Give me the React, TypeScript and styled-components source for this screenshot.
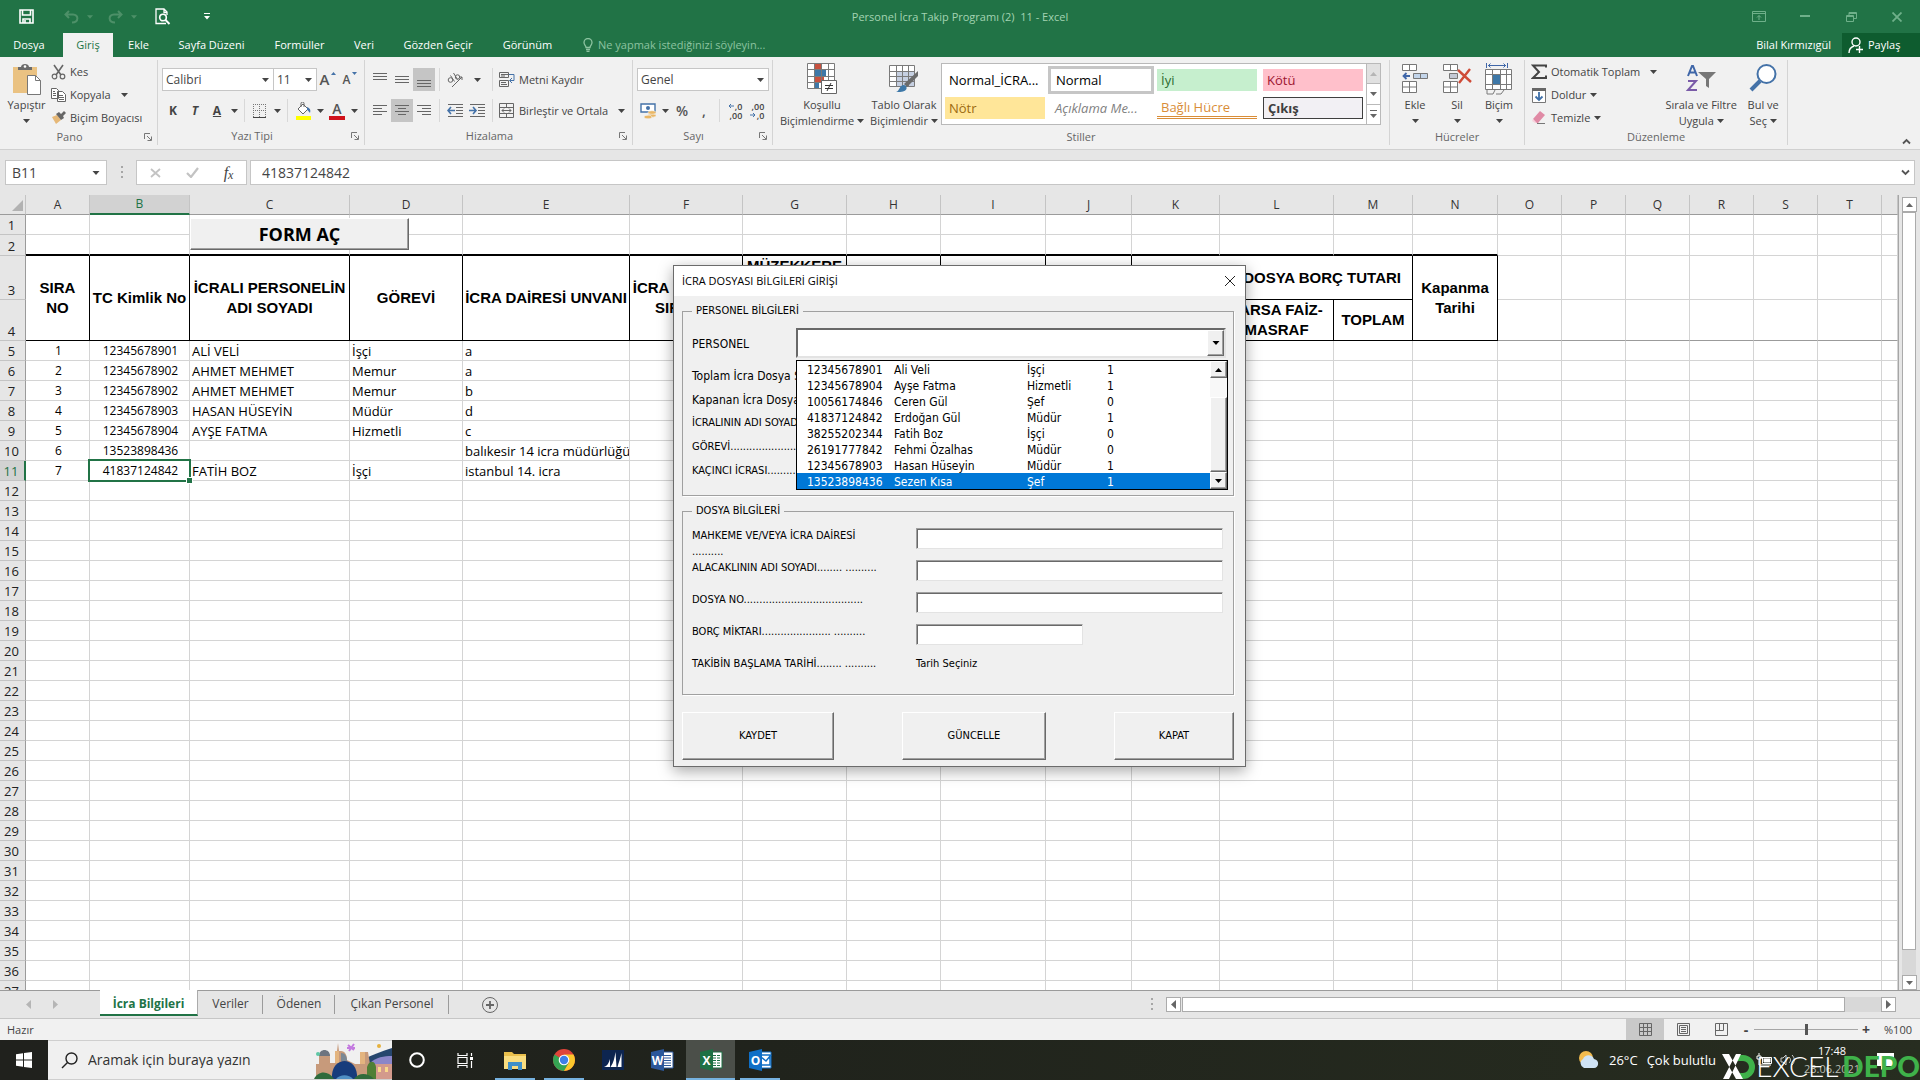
import React from 'react';
import styled, { createGlobalStyle, css } from 'styled-components';

const ui = '"Open Sans", "Noto Sans", sans-serif';
const form = '"DejaVu Sans Condensed", "DejaVu Sans", sans-serif';
const arial = '"Liberation Sans", Arial, sans-serif';

const Global = createGlobalStyle`
  * { box-sizing: border-box; }
  body { margin: 0; overflow: hidden; background: #e6e6e6; }
  button, input, select { font: inherit; color: inherit; margin: 0; padding: 0; border: 0; background: none; border-radius: 0; outline: none; }
  svg { display: block; flex: none; }
`;

const Screen = styled.div`
  position: relative;
  display: flex;
  flex-direction: column;
  height: 100vh;
  font: 12px/16px ${ui};
  color: #444;
  white-space: nowrap;
`;

/* ---------- title bar and ribbon tabs ---------- */
const TitleBar = styled.header`
  display: grid;
  grid-template-columns: 1fr auto 1fr;
  align-items: center;
  height: 33px;
  background: #217346;
  color: #a3d3b2;
  font-size: 11px;
`;
const QuickAccess = styled.div`
  display: flex;
  align-items: center;
  padding-left: 19px;
`;
const QuickButton = styled.button<{ $w: number; $dim?: boolean }>`
  display: flex;
  align-items: center;
  gap: 8px;
  width: ${p => p.$w}px;
  color: ${p => (p.$dim ? '#4d9068' : '#fff')};
`;
const WindowControls = styled.div`
  display: flex;
  justify-content: flex-end;
`;
const WindowButton = styled.button`
  display: grid;
  place-items: center;
  width: 46px;
  height: 30px;
  color: #6fb08a;
`;
const TabBar = styled.nav`
  display: flex;
  height: 24px;
  background: #217346;
  color: #fff;
`;
const RibbonTab = styled.button<{ $active?: boolean; $w: number; $file?: boolean }>`
  width: ${p => p.$w}px;
  height: 24px;
  padding-right: ${p => (p.$file ? 5 : 0)}px;
  font-size: 11px;
  ${p => p.$active && css`background: #f1f1f1; color: #217346;`}
`;
const TellMe = styled.button`
  display: flex;
  align-items: center;
  gap: 5px;
  margin-left: 16px;
  font-size: 11px;
  color: #8cc3a0;
`;
const Account = styled.button`
  margin-left: auto;
  padding-right: 11px;
  font-size: 11px;
`;
const Share = styled.button`
  display: flex;
  align-items: center;
  gap: 4px;
  width: 78px;
  padding-left: 6px;
  background: #0e5c2f;
  font-size: 11px;
`;

/* ---------- ribbon ---------- */
const Ribbon = styled.div`
  display: flex;
  height: 93px;
  background: #f1f1f1;
  border-bottom: 1px solid #d0d0d0;
  font-size: 11px;
`;
const Group = styled.section<{ $w: number }>`
  display: flex;
  flex-direction: column;
  width: ${p => p.$w}px;
  margin: 3px 0 4px;
  border-right: 1px solid #d4d4d4;
`;
const GroupBody = styled.div`
  display: flex;
  flex: 1;
  padding: 0 0 0 4px;
`;
const GroupLabel = styled.div<{ $launcher?: boolean }>`
  display: grid;
  grid-template-columns: ${p => (p.$launcher ? '1fr 18px' : '1fr')};
  align-items: center;
  justify-items: center;
  height: 18px;
  color: #666;
`;
const Rows = styled.div`
  display: flex;
  flex-direction: column;
  gap: 8px;
  padding-top: 8px;
`;
const Row = styled.div`
  display: flex;
  height: 23px;
`;
const Tool = styled.button<{ $on?: boolean; $w?: number }>`
  display: flex;
  align-items: center;
  justify-content: center;
  gap: 2px;
  width: ${p => p.$w ?? 22}px;
  height: 23px;
  background: ${p => (p.$on ? '#c5c5c5' : 'none')};
`;
const Sep = styled.i`
  width: 1px;
  margin: 0 4px;
  background: #d8d8d8;
`;
const Combo = styled.label<{ $w: number }>`
  position: relative;
  display: flex;
  align-items: center;
  width: ${p => p.$w}px;
  height: 23px;
  background: #fff;
  border: 1px solid #c6c6c6;
  & + & { border-left: 0; }
  select { appearance: none; width: 100%; height: 100%; padding: 0 3px; font-size: 12px; }
  svg { position: absolute; right: 4px; pointer-events: none; }
`;
const SmallColumn = styled.div`
  display: flex;
  flex-direction: column;
`;
const TextTool = styled.button<{ $far?: boolean }>`
  display: flex;
  align-items: center;
  gap: 4px;
  height: 23px;
  padding-left: 2px;
  svg:last-child:not(:first-child) { margin-left: ${p => (p.$far ? 6 : 0)}px; }
`;
const BigTool = styled.button<{ $w: number }>`
  display: flex;
  flex-direction: column;
  align-items: center;
  width: ${p => p.$w}px;
  line-height: 16px;
  > svg { height: 32px; margin: 3px 0 2px; }
`;
const BigLine = styled.span`
  display: flex;
  align-items: center;
  gap: 3px;
  height: 16px;
`;
const Gallery = styled.div`
  display: flex;
  width: 440px;
  height: 62px;
  margin-top: 3px;
  background: #fff;
  border: 1px solid #b9b9b9;
`;
const GalleryGrid = styled.div`
  display: grid;
  grid-template-columns: repeat(4, 1fr);
  grid-auto-rows: 28px;
  flex: 1;
  padding-top: 2px;
`;
const Swatch = styled.button<{ $bg?: string; $fg?: string; $kind?: string }>`
  margin: 3px;
  padding-left: 4px;
  text-align: left;
  font-size: 13px;
  line-height: 20px;
  background: ${p => p.$bg ?? '#fff'};
  color: ${p => p.$fg ?? '#000'};
  ${p => p.$kind === 'current' && css`margin: 0; padding-left: 5px; border: 3px solid #c6c6c6;`}
  ${p => p.$kind === 'note' && css`font-style: italic;`}
  ${p => p.$kind === 'link' && css`border-bottom: 3px double #d98d38;`}
  ${p => p.$kind === 'output' && css`border: 1px solid #3f3f3f; font-weight: 700;`}
`;
const GallerySteps = styled.div`
  display: flex;
  flex-direction: column;
  width: 14px;
  border-left: 1px solid #b9b9b9;
`;
const GalleryStep = styled.button<{ $off?: boolean }>`
  display: grid;
  place-items: center;
  flex: 1;
  background: ${p => (p.$off ? '#e1e1e1' : '#fff')};
  color: ${p => (p.$off ? '#b5b5b5' : '#666')};
  & + & { border-top: 1px solid #b9b9b9; }
`;
const Collapse = styled.button`
  align-self: flex-end;
  margin: 0 9px 4px auto;
`;

/* ---------- formula bar ---------- */
const FormulaBar = styled.div`
  display: flex;
  align-items: center;
  height: 45px;
  padding: 0 5px;
  background: #e6e6e6;
`;
const NameBox = styled.div`
  display: flex;
  align-items: center;
  width: 102px;
  height: 25px;
  padding: 0 6px;
  background: #fff;
  border: 1px solid #c6c6c6;
  input { width: 80px; font-size: 14px; }
`;
const Grip = styled.span`
  display: grid;
  place-items: center;
  width: 29px;
  color: #a6a6a6;
`;
const FxBox = styled.div`
  display: flex;
  justify-content: space-around;
  align-items: center;
  width: 111px;
  height: 25px;
  margin-right: 3px;
  background: #fff;
  border: 1px solid #c6c6c6;
`;
const FormulaField = styled.div`
  display: flex;
  align-items: center;
  flex: 1;
  height: 25px;
  padding: 0 4px 0 11px;
  background: #fff;
  border: 1px solid #c6c6c6;
  input { flex: 1; font-size: 14px; }
`;
const FxLetters = styled.button`
  font: italic 400 16px/20px "Liberation Serif", serif;
  sub { font-size: 12px; line-height: 1; vertical-align: -1px; }
`;

/* ---------- worksheet ---------- */
const SheetArea = styled.main`
  display: flex;
  flex: 1;
  min-height: 0;
`;
const GridView = styled.div`
  position: relative;
  flex: 1;
  min-width: 0;
  overflow: hidden;
  border-right: 1px solid #a6a6a6;
`;
const Grid = styled.table`
  width: 100%;
  table-layout: fixed;
  border-collapse: separate;
  border-spacing: 0;
  font-size: 13px;
  line-height: 18px;
  color: #000;
`;
const ColHead = styled.th<{ $on?: boolean }>`
  height: 20px;
  padding: ${p => (p.$on ? '0' : '1px 0 0')};
  font-size: 12px;
  font-weight: 400;
  color: ${p => (p.$on ? '#217346' : '#333')};
  background: ${p => (p.$on ? '#d2d2d2' : '#e6e6e6')};
  border-right: 1px solid #c4c4c4;
  border-bottom: ${p => (p.$on ? '2px solid #217346' : '1px solid #9b9b9b')};
`;
const Corner = styled(ColHead)`
  svg { margin: 0 2px 0 auto; }
`;
const RowHead = styled.th<{ $on?: boolean; $h: number }>`
  height: ${p => p.$h}px;
  padding: 0 2px 0 0;
  font-weight: 400;
  vertical-align: bottom;
  color: ${p => (p.$on ? '#217346' : '#222')};
  background: ${p => (p.$on ? '#d2d2d2' : '#e6e6e6')};
  border-right: ${p => (p.$on ? '2px solid #217346' : '1px solid #9b9b9b')};
  border-bottom: 1px solid #c4c4c4;
`;
const Cell = styled.td<{ $center?: boolean; $rule?: 'thick' | 'frozen' }>`
  padding: 1px 0 0 2px;
  overflow: hidden;
  vertical-align: middle;
  text-align: ${p => (p.$center ? 'center' : 'left')};
  font-size: ${p => (p.$center ? 12 : 13)}px;
  background: #fff;
  border-right: 1px solid #d4d4d4;
  border-bottom: ${p =>
    p.$rule === 'thick' ? '2px solid #000' : p.$rule === 'frozen' ? '1px solid #9b9b9b' : '1px solid #d4d4d4'};
`;
const HeaderCell = styled.th<{ $align?: string }>`
  padding: ${p => (p.$align === 'right' ? '0 11px' : '0')};
  overflow: hidden;
  vertical-align: ${p => (p.$align === 'top' ? 'top' : 'middle')};
  text-align: ${p => (p.$align === 'right' ? 'right' : 'center')};
  font: 700 15px/20px ${arial};
  background: #fff;
  border-right: 1px solid #000;
  border-bottom: 1px solid #000;
`;
const Selected = styled(Cell)`
  position: relative;
  overflow: visible;
  &::before { content: ''; position: absolute; inset: -2px; border: 2px solid #217346; }
  &::after { content: ''; position: absolute; right: -3px; bottom: -3px; width: 5px; height: 5px; background: #217346; outline: 1px solid #fff; }
`;
const bevel = css`
  background: #f0f0f0;
  border: 1px solid;
  border-color: #fff #696969 #696969 #fff;
  box-shadow: inset -1px -1px #a0a0a0;
  color: #000;
`;
const OpenForm = styled.button`
  ${bevel}
  position: absolute;
  top: 23px;
  left: 190px;
  width: 219px;
  height: 32px;
  font: 700 18px/24px ${ui};
`;
const VScroll = styled.div`
  display: flex;
  flex-direction: column;
  width: 21px;
  padding: 2px 4px 0 3px;
`;
const ScrollButton = styled.button`
  display: grid;
  place-items: center;
  flex: none;
  width: 15px;
  height: 15px;
  background: #fff;
  border: 1px solid #ababab;
  color: #666;
`;
const VThumb = styled.div`
  flex: 1;
  background: #fff;
  border: 1px solid #ababab;
`;
const VTrack = styled.div`
  height: 25px;
  background: #d8d8d8;
`;

/* ---------- sheet tabs and status bar ---------- */
const SheetBar = styled.div`
  display: flex;
  height: 28px;
  border-top: 1px solid #9b9b9b;
  background: #e6e6e6;
`;
const TabArrows = styled.div`
  display: flex;
  align-items: center;
  gap: 22px;
  width: 100px;
  padding-left: 26px;
  color: #b5b5b5;
`;
const SheetTab = styled.button<{ $active?: boolean; $w: number }>`
  position: relative;
  width: ${p => p.$w}px;
  height: 25px;
  color: #444;
  &::after { content: ''; position: absolute; right: 0; top: 4px; bottom: 2px; border-right: 1px solid #9b9b9b; }
  ${p => p.$active && css`
    background: #fff; color: #217346; font-weight: 700; border-bottom: 2px solid #217346;
    margin-top: -1px; height: 26px; padding-top: 3px; border-right: 1px solid #ababab;
    &::after { display: none; }
  `}
`;
const AddSheet = styled.button`
  width: 82px;
  display: grid;
  place-items: center;
  color: #666;
`;
const HScroll = styled.div`
  display: flex;
  align-items: center;
  width: 759px;
  margin: 0 24px 0 auto;
`;
const HThumb = styled.div`
  flex: 1;
  height: 15px;
  margin-left: 1px;
  background: #fff;
  border: 1px solid #ababab;
`;
const HTrack = styled.div`
  width: 36px;
  height: 15px;
  background: #d8d8d8;
`;
const StatusBar = styled.footer`
  display: flex;
  align-items: center;
  height: 22px;
  padding: 0 8px 0 7px;
  border-top: 1px solid #c6c6c6;
  background: #f1f1f1;
  font-size: 11px;
  > span:first-child { margin-right: auto; }
`;
const ViewButton = styled.button<{ $on?: boolean }>`
  display: grid;
  place-items: center;
  width: 38px;
  height: 21px;
  color: #666;
  background: ${p => (p.$on ? '#c9c9c9' : 'none')};
`;
const ZoomRange = styled.input`
  appearance: none;
  width: 104px;
  height: 16px;
  margin: 0 2px;
  background: linear-gradient(#a6a6a6, #a6a6a6) center / 100% 1px no-repeat;
  &::-webkit-slider-thumb { appearance: none; width: 3px; height: 11px; background: #555; }
`;
const ZoomStep = styled.button`
  width: 12px;
  font-weight: 700;
  font-size: 14px;
`;
const ZoomValue = styled.span`
  width: 40px;
  text-align: right;
`;

/* ---------- taskbar ---------- */
const Taskbar = styled.div`
  position: relative;
  display: flex;
  height: 40px;
  background: linear-gradient(90deg, #20211d, #20231c 40%, #272d20);
  color: #fff;
`;
const TaskButton = styled.button<{ $w?: number; $open?: boolean; $on?: boolean }>`
  display: grid;
  place-items: center;
  width: ${p => p.$w ?? 49}px;
  height: 40px;
  background: ${p => (p.$on ? '#4b4f49' : 'none')};
  ${p => p.$open && css`
    background-image: linear-gradient(#76b2e0, #76b2e0);
    background-position: bottom center;
    background-repeat: no-repeat;
    background-size: ${p.$on ? '100%' : '40px'} 2px;
  `}
`;
const SearchBox = styled.label`
  display: flex;
  align-items: center;
  width: 344px;
  padding-left: 13px;
  background: #f0f0f0;
  border: 1px solid #cfcfcf;
  border-width: 1px 0;
  color: #222;
  input { width: 226px; padding-left: 10px; font-size: 14px; }
  input::placeholder { color: #333; opacity: 1; }
  svg:last-child { margin-left: auto; }
`;
const Tray = styled.div`
  display: flex;
  align-items: center;
  width: 342px;
  margin-left: auto;
`;
const Weather = styled.button`
  display: flex;
  align-items: center;
  gap: 9px;
  width: 178px;
  font-size: 13px;
`;
const TrayIcons = styled.div`
  display: flex;
  gap: 6px;
`;
const Clock = styled.div`
  display: flex;
  flex-direction: column;
  align-items: center;
  width: 64px;
  margin-left: 4px;
  font-size: 11px;
  line-height: 18px;
  span { color: #b9bcb4; }
`;
const Notice = styled.button`
  margin: 2px 0 0 13px;
`;
const Watermark = styled.div`
  position: absolute;
  right: 0;
  bottom: 0;
  display: flex;
  align-items: center;
  font: 300 28px/28px Lato, sans-serif;
  color: #fff;
  pointer-events: none;
  b { margin-left: 4px; font-weight: 900; color: #3fb24a; }
`;

/* ---------- dialog ---------- */
const Dialog = styled.form`
  position: absolute;
  top: 265px;
  left: calc(50% - 287px);
  width: 573px;
  background: #f0f0f0;
  border: 1px solid #6b6b6b;
  box-shadow: 0 4px 14px rgba(0, 0, 0, 0.35);
  font: 11px/14px ${form};
  color: #000;
`;
const DialogTitle = styled.div`
  display: flex;
  justify-content: space-between;
  align-items: center;
  height: 30px;
  padding: 0 9px 0 8px;
  background: #fff;
  font: 11px/16px ${ui};
`;
const DialogBody = styled.div`
  padding: 7px 11px 6px 8px;
`;
const Frame = styled.fieldset<{ $h: number }>`
  position: relative;
  height: ${p => p.$h}px;
  margin: 0 0 7px;
  padding: 0 9px;
  border: 1px solid #a0a0a0;
  box-shadow: 1px 1px #fff;
  legend { margin-left: 0; padding: 0 4px; line-height: 16px; }
`;
const PersonRow = styled.div`
  display: flex;
  align-items: center;
  height: 36px;
  margin-top: 7px;
  font-size: 12px;
  label { width: 104px; }
`;
const PersonSelect = styled.div`
  position: relative;
  flex: 1;
  align-self: flex-start;
  height: 30px;
  margin: 2px -2px 0 0;
  background: #fff;
  border: 2px solid;
  border-color: #696969 #e3e3e3 #e3e3e3 #696969;
  select { appearance: none; width: 100%; height: 100%; }
`;
const DropButton = styled.button`
  ${bevel}
  display: grid;
  place-items: center;
  flex: none;
  width: 17px;
  height: 17px;
`;
const DropArrow = styled.span`
  ${bevel}
  position: absolute;
  top: 0;
  right: 0;
  display: grid;
  place-items: center;
  width: 17px;
  height: 26px;
  pointer-events: none;
`;
const DropList = styled.div`
  position: absolute;
  z-index: 1;
  top: 30px;
  left: -2px;
  right: -4px;
  display: flex;
  background: #fff;
  border: 1px solid #000;
`;
const Options = styled.ul`
  flex: 1;
  margin: 0;
  padding: 0;
  list-style: none;
`;
const Option = styled.li<{ $on?: boolean }>`
  display: grid;
  grid-template-columns: 87px 133px 80px 1fr;
  height: 16px;
  padding-left: 10px;
  font-size: 12px;
  line-height: 18px;
  background: ${p => (p.$on ? '#0078d7' : '#fff')};
  color: ${p => (p.$on ? '#fff' : '#000')};
`;
const ListScroll = styled.div`
  display: flex;
  flex-direction: column;
  width: 17px;
  background: #f8f8f8;
`;
const ListThumb = styled.div`
  ${bevel}
  flex: 1;
  margin-top: 19px;
`;
const Fact = styled.div<{ $h: number; $big?: boolean }>`
  height: ${p => p.$h}px;
  line-height: ${p => p.$h}px;
  font-size: ${p => (p.$big ? 12 : 11)}px;
`;
const FieldList = styled.div`
  padding-top: 9px;
`;
const Field = styled.div`
  display: flex;
  height: 32px;
  line-height: 16px;
  label { width: 224px; white-space: pre-line; }
`;
const FieldInput = styled.input<{ $w: number }>`
  width: ${p => p.$w}px;
  height: 21px;
  background: #fff;
  border: 1px solid;
  border-color: #a0a0a0 #e3e3e3 #e3e3e3 #a0a0a0;
  box-shadow: inset 1px 1px #696969;
`;
const Actions = styled.div`
  display: flex;
  justify-content: space-between;
  margin-top: 17px;
`;
const Action = styled.button<{ $w: number }>`
  ${bevel}
  width: ${p => p.$w}px;
  height: 48px;
`;

/* ---------- icons ---------- */
const Down = ({ s = 7 }: { s?: number }) => (
  <svg width={s} height="4" viewBox="0 0 7 4"><path d="M0 0h7L3.500 4z" fill="currentColor" /></svg>
);
const Up = () => <svg width="7" height="4" viewBox="0 0 7 4"><path d="M0 4h7L3.500 0z" fill="currentColor" /></svg>;
const Left = () => <svg width="5" height="9" viewBox="0 0 5 9"><path d="M5 0v9L0 4.500z" fill="currentColor" /></svg>;
const Right = () => <svg width="5" height="9" viewBox="0 0 5 9"><path d="M0 0v9l5-4.500z" fill="currentColor" /></svg>;
const Launcher = () => (
  <svg width="8" height="8" viewBox="0 0 8 8" fill="none" stroke="#777"><path d="M.5 6V.500H6M3 3l4 4M7.500 3.500v4h-4" /></svg>
);
const Lines = ({ y, xs }: { y: number[]; xs: number[][] }) => (
  <svg width="15" height="17" viewBox="0 0 15 17" stroke="#666">
    {y.map((v, i) => <path key={v} d={`M${xs[i % xs.length][0]} ${v}.5H${xs[i % xs.length][1]}`} />)}
  </svg>
);
const full = [[0, 14]];
const PasteIcon = () => (
  <svg width="30" height="32" viewBox="0 0 30 32">
    <path d="M1 4h24v26H1z" fill="#eac282" /><path d="M6 7V4h3c0-4 8-4 8 0h3v3z" fill="#6b6b6b" /><circle cx="13" cy="3.500" r="1.300" fill="#fff" />
    <path d="M15.500 12.500h8l5 5v14h-13z" fill="#fff" stroke="#777" /><path d="M23.500 12.500v5h5" fill="none" stroke="#777" />
  </svg>
);
const CutIcon = () => (
  <svg width="15" height="16" viewBox="0 0 15 16" fill="none" stroke="#666" strokeWidth="1.600">
    <path d="M3 1l7 10M12 1L5 11" /><circle cx="3.500" cy="12.500" r="2.300" strokeWidth="1.200" /><circle cx="11.500" cy="12.500" r="2.300" strokeWidth="1.200" />
  </svg>
);
const CopyIcon = () => (
  <svg width="15" height="14" viewBox="0 0 15 14" fill="#fff" stroke="#666">
    <path d="M.5.500h5l2 2v8h-7zM6.500 3.500h5l3 3v7h-8z" /><path d="M2 3.500h2M2 5.500h3M2 7.500h3M8 7.500h4M8 9.500h5M8 11.500h5" />
  </svg>
);
const BrushIcon = () => (
  <svg width="15" height="14" viewBox="0 0 15 14"><path d="M1 6l5-2 4 5-5 4z" fill="#e6b877" /><path d="M5 3l3-2 2 2 3-3 2 2-3 3 1 2-3 2z" fill="#666" /></svg>
);
const BordersIcon = () => (
  <svg width="14" height="14" viewBox="0 0 14 14" fill="none" stroke="#777" strokeDasharray="1 1"><path d="M.5 0v13M6.500 0v13M12.500 0v13M0 .5h13M0 6.500h13" /><path d="M0 13.500h13" strokeDasharray="none" stroke="#444" /></svg>
);
const FillIcon = () => (
  <svg width="17" height="18" viewBox="0 0 17 18"><path d="M3 7l5-5 5 5-5 5z" fill="#fff" stroke="#666" /><path d="M6 5V1.500a1.500 1.500 0 013 0V5" fill="none" stroke="#666" /><path d="M12 5c3 1 4 3 3 6-1-1-2-3-3-3z" fill="#4472a8" /><path d="M1 14h15v4H1z" fill="#ff0" /></svg>
);
const LetterA = styled.span<{ $bar?: string; $s?: number }>`
  ${p => p.$bar && css`width: 16px; border-bottom: 4px solid ${p.$bar};`}
  line-height: 15px;
  font-weight: 600;
  font-size: ${p => p.$s ?? 14}px;
  color: #555;
`;
const Mark = styled.span<{ $k?: string }>`
  font-size: 12px;
  font-weight: 700;
  font-style: ${p => (p.$k === 'i' ? 'italic' : 'normal')};
  text-decoration: ${p => (p.$k === 'u' ? 'underline' : 'none')};
`;
const Sign = styled.span`
  font-size: 14px;
  font-weight: 600;
  color: #555;
`;
const Caret = styled.span`
  align-self: flex-start;
  padding-top: 4px;
  color: #4472a8;
  svg { width: 5px; height: 3px; }
`;
const OrientIcon = () => (
  <svg width="17" height="16" viewBox="0 0 17 16" fill="none" stroke="#666">
    <circle cx="3.500" cy="8" r="2.300" /><path d="M3.500 3.500l4 6" /><path d="M6.500 1l4 6.500" /><circle cx="10.500" cy="5" r="2.200" /><path d="M5 15L15 5M12 5h3v3" />
  </svg>
);
const WrapIcon = () => (
  <svg width="16" height="16" viewBox="0 0 16 16" fill="none" stroke="#666"><path d="M.5.500h9v5h-9zM.5 8.500h9v6h-9zM2 2.500h8M2 4h4M2 10.500h5M2 12.500h6" /><path d="M10 2.500h5v6h-4M13 6l-2.500 2.500L13 11" stroke="#4472a8" /></svg>
);
const MergeIcon = () => (
  <svg width="16" height="15" viewBox="0 0 16 15" fill="none" stroke="#666"><path d="M.5.500h14v14H.500zM0 4.500h15M0 10.500h15M7.500 0v4M7.500 11v4M3 7.500h9M5 5.500l-2 2 2 2M10 5.500l2 2-2 2" /></svg>
);
const IndentIcon = ({ out }: { out?: boolean }) => (
  <svg width="17" height="14" viewBox="0 0 17 14" fill="none" stroke="#666"><path d="M1 .5h15M9 3.500h7M9 6.500h7M9 9.500h7M1 12.500h15" /><path d={out ? 'M8 6.500H1M4 3L1 6.500 4 10' : 'M0 6.500h7M4 3l3 3.500L4 10'} stroke="#4472a8" strokeWidth="1.600" /></svg>
);
const MoneyIcon = () => (
  <svg width="17" height="16" viewBox="0 0 17 16"><path d="M1 1h14v8H1z" fill="#fff" stroke="#4472a8" strokeWidth="1.400" /><circle cx="8" cy="5" r="2" fill="#4472a8" /><g fill="#eab765" stroke="#f1f1f1" strokeWidth=".6"><ellipse cx="12" cy="12.500" rx="4" ry="1.800" /><ellipse cx="12" cy="9.500" rx="4" ry="1.800" /><ellipse cx="8" cy="14" rx="4" ry="1.800" /></g></svg>
);
const Decimals = styled.span`
  display: flex;
  flex-direction: column;
  align-items: flex-end;
  font: 600 9px/9px ${ui};
  span { display: flex; align-items: center; gap: 1px; }
`;
const TinyArrow = ({ r }: { r?: boolean }) => (
  <svg width="6" height="6" viewBox="0 0 6 6" fill="none" stroke="#4472a8"><path d={r ? 'M0 3h5M3 1l2 2-2 2' : 'M6 3H1M3 1L1 3l2 2'} /></svg>
);
const ConditionalIcon = () => (
  <svg width="30" height="32" viewBox="0 0 30 32">
    <path d="M.5.500h27v25H.500z" fill="#fff" /><path d="M8 1h6v6H8zM8 14h9v5H8z" fill="#c8513f" /><path d="M8 7h11v6H8zM8 19h4v6H8z" fill="#3e78a8" />
    <path d="M.5.500h27v25H.500zM7.500 0v26M14.500 0v26M21.500 0v26M0 6.500h28M0 13.500h28M0 19.500h28" fill="none" stroke="#7a7a7a" />
    <path d="M14.500 17.500h15v13h-15z" fill="#fff" stroke="#666" /><path d="M18 22.500h8M18 25.500h8M24 20l-4 8" stroke="#333" />
  </svg>
);
const TableIcon = () => (
  <svg width="30" height="32" viewBox="0 0 30 32">
    <path d="M.5 2.500h25v21H.500z" fill="#fff" /><path d="M8 9h17v14H8z" fill="#c6d0e2" /><path d="M.5 2.500h25v21H.500zM7.500 2v22M13.500 2v22M19.500 2v22M0 8.500h26M0 13.500h26M0 18.500h26" fill="none" stroke="#7a7a7a" />
    <path d="M29 8v5L18 24l-3-3z" fill="#6b6b6b" /><path d="M7 29c4-1 3-7 8-7 4 1 5 8-8 7z" fill="#3e78a8" />
  </svg>
);
const InsertIcon = () => (
  <svg width="28" height="32" viewBox="0 0 28 32" fill="#fff" stroke="#777"><path d="M1.500 1.500h14v6h-14zM8.500 1.500v6M1.500 18.500h14v11h-14zM1.500 24h14M8.500 18.500v11" /><path d="M12.500 10.500h14v5h-14zM19.500 10.500v5" fill="#c3d5ea" /><path d="M9 13H3M5.500 10L2.500 13l3 3" stroke="#3f66a8" strokeWidth="1.800" fill="none" /></svg>
);
const DeleteIcon = () => (
  <svg width="30" height="32" viewBox="0 0 30 32" fill="#fff" stroke="#777"><path d="M1.500 1.500h14v6h-14zM8.500 1.500v6M1.500 18.500h14v11h-14zM1.500 24h14M8.500 18.500v11" /><path d="M7.500 10.500h8v5h-8z" fill="#c3c9d5" /><path d="M16 7l13 12M28 6L17 20" stroke="#cf4b37" strokeWidth="2.400" fill="none" /></svg>
);
const FormatIcon = () => (
  <svg width="30" height="32" viewBox="0 0 30 32" fill="none"><path d="M1.500 6.500h26v20h-26z" fill="#fff" /><path d="M9 12h8v9H9z" fill="#3e78a8" /><path d="M1.500 6.500h26v20h-26zM8.500 6v21M16.500 6v21M22.500 6v21M1 11.500h27M1 21.500h27M3 27v4h6l2-4M12 31h5l3-4" stroke="#7a7a7a" /><path d="M2.500 0v5M23.500 0v5M4 2.500h18M6.500.500l-2 2 2 2M19.500.500l2 2-2 2" stroke="#3f66a8" /></svg>
);
const SigmaIcon = () => <svg width="16" height="16" viewBox="0 0 16 16" fill="none" stroke="#444" strokeWidth="2"><path d="M15 3.500V1.500H2l6 6.500-6 6h13v-2.500" /></svg>;
const FillDownIcon = () => <svg width="16" height="16" viewBox="0 0 16 16" fill="none"><path d="M1.500 1.500h13v14h-13z" fill="#fff" stroke="#777" /><path d="M1 1h14v3H1z" fill="#666" /><path d="M8 5v8M4.500 9.500L8 13l3.500-3.500" stroke="#3e6fa8" strokeWidth="1.800" /></svg>;
const EraserIcon = () => <svg width="16" height="15" viewBox="0 0 16 15"><path d="M2 9l7-8 5 4-7 8H5z" fill="#e08aa5" /><path d="M2 9l4 4H4L1 11z" fill="#f7d2dd" /><path d="M6 13.500h8" stroke="#777" /></svg>;
const SortFilterIcon = () => (
  <svg width="32" height="32" viewBox="0 0 32 32" fill="none"><path d="M3 13L7 3h1l4 10M4.500 9.500h6" stroke="#3f66a8" strokeWidth="2" /><path d="M3 18h8L3 27h9" stroke="#7a5ba8" strokeWidth="2" /><path d="M13 9h18l-7 7v9l-3-2v-7z" fill="#777" /></svg>
);
const FindIcon = () => <svg width="30" height="32" viewBox="0 0 30 32" fill="none"><circle cx="18.500" cy="11" r="9" fill="#fff" stroke="#4472a8" strokeWidth="2" /><path d="M12 18L3 27" stroke="#4472a8" strokeWidth="4" /></svg>;
const Chevron = ({ up }: { up?: boolean }) => <svg width="9" height="7" viewBox="0 0 9 7" fill="none" stroke="#555" strokeWidth="1.800"><path d={up ? 'M1 5.500L4.500 2 8 5.500' : 'M1 1.500L4.500 5 8 1.500'} /></svg>;
const SearchArt = () => (
  <svg width="78" height="38" viewBox="0 0 78 38">
    <path d="M50 18C58 14 68 10 78 7v31H48z" fill="#26466e" />
    <path d="M2 23h3V16c0-7 11-7 11 0v6h5V10h2l1-8 1 8h2c4 0 6 4 6 9l8 4h5V11h8l2 12h5v15H2z" fill="#c79a7b" />
    <path d="M5 15c0-8 11-8 11 0z" fill="#6d7480" /><path d="M21 10h4v12h-4zM46 11h5v12h-5z" fill="#e3b47f" /><path d="M27 12c4 0 6 3 6 8h-6z" fill="#7b8794" />
    <path d="M56 22c6-6 14-7 22-7v9H56z" fill="#8b86c9" /><path d="M61 23h17v15H61z" fill="#d39a8c" />
    <path d="M18 38c-2-24 27-24 25 0z" fill="#173c7c" /><path d="M22 38c4-5 13-5 17 0z" fill="#4f8fc4" />
    <path d="M53 38V26c2-7 8-7 9 0v12z" fill="#4f7f35" /><path d="M0 38c4-8 14-9 20 0zM40 38c5-7 14-6 20 0z" fill="#2f6b3c" />
    <path d="M34 4l6 5M40 3l-5 7M33 7h8" stroke="#c47ae0" strokeWidth="2" /><circle cx="65" cy="5" r="2" fill="#e6b13d" /><circle cx="4" cy="13" r="2" fill="#5fc7a5" />
    <path d="M64 26h3v5h-3zM71 26h3v5h-3z" fill="#f9d88a" />
  </svg>
);
const OfficeIcon = ({ c, letter }: { c: string; letter: string }) => (
  <svg width="24" height="22" viewBox="0 0 24 22">
    <path d="M12 3h11v16H12z" fill="#fff" stroke={c} />
    {letter === 'O' ? <path d="M13 6h9v10h-9zM13 8l5 4 5-6" fill="#fff" stroke={c} strokeWidth="1.500" /> : <path d="M14 6.500h7M14 9h7M14 11.500h7M14 14h7M14 16.500h7" stroke={c} />}
    {letter === 'X' && <path d="M17.500 5v13" stroke="#fff" />}
    <path d="M1 3l13-3v22L1 19z" fill={c} />
    <text x="7.500" y="15.500" textAnchor="middle" fontFamily="Open Sans, sans-serif" fontWeight="700" fontSize="12" fill="#fff">{letter}</text>
  </svg>
);

/* ---------- data ---------- */
const letters = 'ABCDEFGHIJKLMNOPQRST'.split('');
const widths = [64, 100, 160, 113, 167, 113, 104, 94, 105, 86, 88, 114, 79, 85, 64, 64, 64, 64, 64, 64];
const records: Record<number, string[]> = {
  5: ['1', '12345678901', 'ALİ VELİ', 'İşçi', 'a'],
  6: ['2', '12345678902', 'AHMET MEHMET', 'Memur', 'a'],
  7: ['3', '12345678902', 'AHMET MEHMET', 'Memur', 'b'],
  8: ['4', '12345678903', 'HASAN HÜSEYİN', 'Müdür', 'd'],
  9: ['5', '12345678904', 'AYŞE FATMA', 'Hizmetli', 'c'],
  10: ['6', '13523898436', '', '', 'balıkesir 14 icra müdürlüğü'],
  11: ['7', '41837124842', 'FATİH BOZ', 'İşçi', 'istanbul 14. icra'],
};
const people = [
  ['12345678901', 'Ali Veli', 'İşçi', '1'],
  ['12345678904', 'Ayşe Fatma', 'Hizmetli', '1'],
  ['10056174846', 'Ceren Gül', 'Şef', '0'],
  ['41837124842', 'Erdoğan Gül', 'Müdür', '1'],
  ['38255202344', 'Fatih Boz', 'İşçi', '0'],
  ['26191777842', 'Fehmi Özalhas', 'Müdür', '0'],
  ['12345678903', 'Hasan Hüseyin', 'Müdür', '1'],
  ['13523898436', 'Sezen Kısa', 'Şef', '1'],
];
const fields = [
  { id: 'court', label: 'MAHKEME VE/VEYA İCRA DAİRESİ\n..........', w: 307 },
  { id: 'creditor', label: 'ALACAKLININ ADI SOYADI........ ..........', w: 307 },
  { id: 'file', label: 'DOSYA NO......................................', w: 307 },
  { id: 'debt', label: 'BORÇ MİKTARI...................... ..........', w: 167 },
];
const swatches = [
  { t: 'Normal_İCRA...' }, { t: 'Normal', k: 'current' }, { t: 'İyi', bg: '#c6efce', fg: '#2a6b2f' }, { t: 'Kötü', bg: '#ffc0cb', fg: '#9c1530' },
  { t: 'Nötr', bg: '#ffe699', fg: '#9c6a10' }, { t: 'Açıklama Me...', k: 'note', fg: '#7f7f7f' }, { t: 'Bağlı Hücre', k: 'link', fg: '#d98d38' }, { t: 'Çıkış', k: 'output', bg: '#f2f0f4', fg: '#3f3f3f' },
];

const RibbonGroup = ({ w, name, launcher, children }: { w: number; name: string; launcher?: boolean; children: React.ReactNode }) => (
  <Group $w={w}>
    <GroupBody>{children}</GroupBody>
    <GroupLabel $launcher={launcher}><span>{name}</span>{launcher && <Launcher />}</GroupLabel>
  </Group>
);

const RibbonView = () => (
  <Ribbon>
    <RibbonGroup w={158} name="Pano" launcher>
      <BigTool $w={45}><PasteIcon /><BigLine>Yapıştır</BigLine><BigLine><Down /></BigLine></BigTool>
      <SmallColumn>
        <TextTool><CutIcon />Kes</TextTool>
        <TextTool $far><CopyIcon />Kopyala<Down /></TextTool>
        <TextTool><BrushIcon />Biçim Boyacısı</TextTool>
      </SmallColumn>
    </RibbonGroup>
    <RibbonGroup w={207} name="Yazı Tipi" launcher>
      <Rows>
        <Row>
          <Combo $w={112}><select aria-label="Yazı tipi"><option>Calibri</option></select><Down /></Combo>
          <Combo $w={43}><select aria-label="Yazı boyutu"><option>11</option></select><Down /></Combo>
          <Tool><LetterA $s={15}>A</LetterA><Caret><Up /></Caret></Tool>
          <Tool><LetterA $s={12}>A</LetterA><Caret><Down /></Caret></Tool>
        </Row>
        <Row>
          <Tool><Mark>K</Mark></Tool><Tool><Mark $k="i">T</Mark></Tool><Tool><Mark $k="u">A</Mark></Tool><Tool $w={12}><Down /></Tool><Sep />
          <Tool><BordersIcon /></Tool><Tool $w={12}><Down /></Tool><Sep />
          <Tool><FillIcon /></Tool><Tool $w={12}><Down /></Tool>
          <Tool><LetterA $bar="#d0121b">A</LetterA></Tool><Tool $w={12}><Down /></Tool>
        </Row>
      </Rows>
    </RibbonGroup>
    <RibbonGroup w={268} name="Hizalama" launcher>
      <Rows>
        <Row>
          <Tool><Lines y={[2, 5, 8]} xs={full} /></Tool><Tool><Lines y={[5, 8, 11]} xs={full} /></Tool><Tool $on><Lines y={[9, 12, 15]} xs={full} /></Tool><Sep />
          <Tool><OrientIcon /></Tool><Tool><Down /></Tool><Sep /><TextTool><WrapIcon />Metni Kaydır</TextTool>
        </Row>
        <Row>
          <Tool><Lines y={[3, 6, 9, 12]} xs={[[0, 14], [0, 9]]} /></Tool><Tool $on><Lines y={[3, 6, 9, 12]} xs={[[0, 14], [3, 11]]} /></Tool><Tool><Lines y={[3, 6, 9, 12]} xs={[[0, 14], [5, 14]]} /></Tool><Sep />
          <Tool><IndentIcon out /></Tool><Tool><IndentIcon /></Tool><Sep /><TextTool $far><MergeIcon />Birleştir ve Ortala<Down /></TextTool>
        </Row>
      </Rows>
    </RibbonGroup>
    <RibbonGroup w={140} name="Sayı" launcher>
      <Rows>
        <Row><Combo $w={132}><select aria-label="Sayı biçimi"><option>Genel</option></select><Down /></Combo></Row>
        <Row>
          <Tool><MoneyIcon /></Tool><Tool $w={12}><Down /></Tool><Tool><Sign>%</Sign></Tool><Tool><Sign>,</Sign></Tool><Sep />
          <Tool><Decimals><span><TinyArrow />,0</span><span>,00</span></Decimals></Tool>
          <Tool><Decimals><span>,00</span><span><TinyArrow r />,0</span></Decimals></Tool>
        </Row>
      </Rows>
    </RibbonGroup>
    <RibbonGroup w={617} name="Stiller">
      <BigTool $w={90}><ConditionalIcon /><BigLine>Koşullu</BigLine><BigLine>Biçimlendirme<Down /></BigLine></BigTool>
      <BigTool $w={74}><TableIcon /><BigLine>Tablo Olarak</BigLine><BigLine>Biçimlendir<Down /></BigLine></BigTool>
      <Gallery>
        <GalleryGrid>
          {swatches.map(s => <Swatch key={s.t} $bg={s.bg} $fg={s.fg} $kind={s.k}>{s.t}</Swatch>)}
        </GalleryGrid>
        <GallerySteps>
          <GalleryStep $off aria-label="Yukarı"><Up /></GalleryStep><GalleryStep aria-label="Aşağı"><Down /></GalleryStep>
          <GalleryStep aria-label="Diğer"><svg width="7" height="8" viewBox="0 0 7 8" fill="currentColor"><path d="M0 0h7v1H0zM0 4h7L3.500 8z" /></svg></GalleryStep>
        </GallerySteps>
      </Gallery>
    </RibbonGroup>
    <RibbonGroup w={135} name="Hücreler">
      <BigTool $w={42}><InsertIcon /><BigLine>Ekle</BigLine><BigLine><Down /></BigLine></BigTool>
      <BigTool $w={42}><DeleteIcon /><BigLine>Sil</BigLine><BigLine><Down /></BigLine></BigTool>
      <BigTool $w={42}><FormatIcon /><BigLine>Biçim</BigLine><BigLine><Down /></BigLine></BigTool>
    </RibbonGroup>
    <RibbonGroup w={263} name="Düzenleme">
      <SmallColumn>
        <TextTool $far><SigmaIcon />Otomatik Toplam<Down /></TextTool>
        <TextTool><FillDownIcon />Doldur<Down /></TextTool>
        <TextTool><EraserIcon />Temizle<Down /></TextTool>
      </SmallColumn>
      <BigTool $w={88}><SortFilterIcon /><BigLine>Sırala ve Filtre</BigLine><BigLine>Uygula<Down /></BigLine></BigTool>
      <BigTool $w={36}><FindIcon /><BigLine>Bul ve</BigLine><BigLine>Seç<Down /></BigLine></BigTool>
    </RibbonGroup>
    <Collapse aria-label="Şeridi daralt"><Chevron up /></Collapse>
  </Ribbon>
);

const rowHeights: Record<number, number> = { 2: 21, 3: 44, 4: 41 };

const SheetGrid = () => (
  <Grid>
    <colgroup><col width={26} />{widths.map((w, i) => <col key={i} width={w} />)}<col /></colgroup>
    <thead>
      <tr>
        <Corner><svg width="11" height="11" viewBox="0 0 11 11"><path d="M11 0v11H0z" fill="#b2b2b2" /></svg></Corner>
        {letters.map(l => <ColHead key={l} $on={l === 'B'}>{l}</ColHead>)}<ColHead />
      </tr>
    </thead>
    <tbody>
      {Array.from({ length: 37 }, (_, i) => i + 1).map(n => (
        <tr key={n}>
          <RowHead $h={rowHeights[n] ?? 20} $on={n === 11}>{n}</RowHead>
          {n === 3 && <>
            <HeaderCell rowSpan={2}>SIRA<br />NO</HeaderCell>
            <HeaderCell rowSpan={2}>TC Kimlik No</HeaderCell>
            <HeaderCell rowSpan={2}>İCRALI PERSONELİN<br />ADI SOYADI</HeaderCell>
            <HeaderCell rowSpan={2}>GÖREVİ</HeaderCell>
            <HeaderCell rowSpan={2}>İCRA DAİRESİ UNVANI</HeaderCell>
            <HeaderCell rowSpan={2}>İCRA DOSYASI<br />SIRA NO</HeaderCell>
            <HeaderCell rowSpan={2} $align="top">MÜZEKKERE</HeaderCell>
            <HeaderCell rowSpan={2} /><HeaderCell rowSpan={2} /><HeaderCell rowSpan={2} />
            <HeaderCell colSpan={3} $align="right">DOSYA BORÇ TUTARI</HeaderCell>
            <HeaderCell rowSpan={2}>Kapanma<br />Tarihi</HeaderCell>
          </>}
          {n === 4 && <><HeaderCell /><HeaderCell>VARSA FAİZ-<br />MASRAF</HeaderCell><HeaderCell>TOPLAM</HeaderCell></>}
          {letters.map((l, c) => {
            if ((n === 3 || n === 4) && c < 14) return null;
            const text = records[n]?.[c] ?? '';
            const C = n === 11 && c === 1 ? Selected : Cell;
            return <C key={l} $center={c < 2} $rule={n === 2 && c < 14 ? 'thick' : n === 4 ? 'frozen' : undefined}>{text}</C>;
          })}
          <Cell $rule={n === 4 ? 'frozen' : undefined} />
        </tr>
      ))}
    </tbody>
  </Grid>
);

const EntryDialog = () => (
  <Dialog onSubmit={e => e.preventDefault()}>
    <DialogTitle>
      <span>İCRA DOSYASI BİLGİLERİ GİRİŞİ</span>
      <button type="button" aria-label="Kapat"><svg width="12" height="12" viewBox="0 0 12 12" stroke="#222"><path d="M1 1l10 10M11 1L1 11" /></svg></button>
    </DialogTitle>
    <DialogBody>
      <Frame $h={193}>
        <legend>PERSONEL BİLGİLERİ</legend>
        <PersonRow>
          <label htmlFor="person">PERSONEL</label>
          <PersonSelect>
            <select id="person" />
            <DropArrow><Down s={8} /></DropArrow>
            <DropList>
              <Options role="listbox" aria-label="Personel listesi">
                {people.map((p, i) => <Option key={p[0]} role="option" aria-selected={i === 7} $on={i === 7}>{p.map((t, k) => <span key={k}>{t}</span>)}</Option>)}
              </Options>
              <ListScroll>
                <DropButton type="button" aria-label="Yukarı"><Up /></DropButton><ListThumb /><DropButton type="button" aria-label="Aşağı"><Down /></DropButton>
              </ListScroll>
            </DropList>
          </PersonSelect>
        </PersonRow>
        <Fact $h={28} $big>Toplam İcra Dosya Sayısı</Fact>
        <Fact $h={21} $big>Kapanan İcra Dosya Sayısı</Fact>
        <Fact $h={24}>İCRALININ ADI SOYADI</Fact>
        <Fact $h={24}>GÖREVİ..........................</Fact>
        <Fact $h={24}>KAÇINCI İCRASI..................</Fact>
      </Frame>
      <Frame $h={192}>
        <legend>DOSYA BİLGİLERİ</legend>
        <FieldList>
          {fields.map(f => <Field key={f.id}><label htmlFor={f.id}>{f.label}</label><FieldInput id={f.id} $w={f.w} /></Field>)}
          <Field><label htmlFor="start">TAKİBİN BAŞLAMA TARİHİ........ ..........</label><output id="start">Tarih Seçiniz</output></Field>
        </FieldList>
      </Frame>
      <Actions><Action type="submit" $w={152}>KAYDET</Action><Action type="button" $w={144}>GÜNCELLE</Action><Action type="button" $w={120}>KAPAT</Action></Actions>
    </DialogBody>
  </Dialog>
);

export default function App() {
  return (
    <Screen>
      <Global />
      <TitleBar>
        <QuickAccess>
          <QuickButton $w={45} aria-label="Kaydet"><svg width="15" height="15" viewBox="0 0 15 15" fill="none" stroke="#fff" strokeWidth="1.600"><path d="M1 1h13v13H1zM3.500 1v5h8V1M4 14v-4h7v4M6 11v3" /></svg></QuickButton>
          <QuickButton $w={44} $dim aria-label="Geri al"><svg width="15" height="14" viewBox="0 0 15 14" fill="none" stroke="currentColor" strokeWidth="2"><path d="M5 1L1.500 4.500 5 8M2 4.500h7c6 0 6 8-1 8" /></svg><Down s={6} /></QuickButton>
          <QuickButton $w={47} $dim aria-label="Yinele"><svg width="15" height="14" viewBox="0 0 15 14" fill="none" stroke="currentColor" strokeWidth="2"><path d="M10 1l3.500 3.500L10 8M13 4.500H6c-6 0-6 8 1 8" /></svg><Down s={6} /></QuickButton>
          <QuickButton $w={49} aria-label="Baskı önizleme"><svg width="16" height="17" viewBox="0 0 16 17" fill="none" stroke="#fff" strokeWidth="1.300"><path d="M11 15.500H1V1h8l3 3v3M9 1v3.500h3" /><circle cx="8" cy="9.500" r="3.300" strokeWidth="1.600" /><path d="M10.500 12l4 4" strokeWidth="2" /></svg></QuickButton>
          <QuickButton $w={10} aria-label="Özelleştir"><svg width="6" height="7" viewBox="0 0 6 7" fill="#fff"><path d="M0 0h6v1H0zM0 3h6L3 6.500z" /></svg></QuickButton>
        </QuickAccess>
        <span>Personel İcra Takip Programı (2)&nbsp; 11 - Excel</span>
        <WindowControls>
          <WindowButton aria-label="Şerit görünümü"><svg width="14" height="11" viewBox="0 0 14 11" fill="none" stroke="currentColor"><path d="M.5.500h13v10H.500zM1 2.500h12M7 9V4.500M5 6.500l2-2 2 2" /></svg></WindowButton>
          <WindowButton aria-label="Simge durumuna küçült"><svg width="10" height="3"><path d="M0 0h10v2H0z" fill="currentColor" /></svg></WindowButton>
          <WindowButton aria-label="Önceki boyut"><svg width="11" height="10" viewBox="0 0 11 10" fill="none" stroke="currentColor"><path d="M.5 3.500h7v6h-7zM.5 4.500h7M3 3V.500h7.500v6H8M3 1.500h7" /></svg></WindowButton>
          <WindowButton aria-label="Kapat"><svg width="10" height="10" viewBox="0 0 10 10" stroke="currentColor" strokeWidth="1.800"><path d="M.5.500l9 9M9.500.500l-9 9" /></svg></WindowButton>
        </WindowControls>
      </TitleBar>
      <TabBar>
        <RibbonTab $w={63} $file>Dosya</RibbonTab><RibbonTab $w={50} $active>Giriş</RibbonTab><RibbonTab $w={51}>Ekle</RibbonTab>
        <RibbonTab $w={95}>Sayfa Düzeni</RibbonTab><RibbonTab $w={81}>Formüller</RibbonTab><RibbonTab $w={48}>Veri</RibbonTab>
        <RibbonTab $w={100}>Gözden Geçir</RibbonTab><RibbonTab $w={79}>Görünüm</RibbonTab>
        <TellMe><svg width="10" height="14" viewBox="0 0 10 14" fill="none" stroke="currentColor" strokeWidth="1.300"><path d="M3 9.500C3 7.500 1 7 1 4.500a4 4 0 018 0C9 7 7 7.500 7 9.500zM3 11.500h4M3.500 13.500h3" /></svg>Ne yapmak istediğinizi söyleyin...</TellMe>
        <Account>Bilal Kırmızıgül</Account>
        <Share><svg width="16" height="17" viewBox="0 0 16 17" fill="none" stroke="#fff" strokeWidth="1.400"><circle cx="8" cy="5" r="4" /><path d="M1 16c0-4 2-6 5-7M8 12.500h7M11.500 9v7" /></svg>Paylaş</Share>
      </TabBar>
      <RibbonView />
      <FormulaBar>
        <NameBox><input aria-label="Ad kutusu" defaultValue="B11" /><Down s={8} /></NameBox>
        <Grip><svg width="2" height="14" fill="currentColor"><path d="M0 0h2v2H0zM0 5h2v2H0zM0 10h2v2H0z" /></svg></Grip>
        <FxBox>
          <button aria-label="İptal"><svg width="11" height="10" viewBox="0 0 11 10" stroke="#c3c3c3" strokeWidth="1.800"><path d="M1 1l9 8M10 1L1 9" /></svg></button>
          <button aria-label="Gir"><svg width="13" height="11" viewBox="0 0 13 11" fill="none" stroke="#c3c3c3" strokeWidth="2.200"><path d="M1 6l4 4 7-9" /></svg></button>
          <FxLetters>f<sub>x</sub></FxLetters>
        </FxBox>
        <FormulaField><input aria-label="Formül çubuğu" defaultValue="41837124842" /><Chevron /></FormulaField>
      </FormulaBar>
      <SheetArea>
        <GridView><SheetGrid /><OpenForm>FORM AÇ</OpenForm></GridView>
        <VScroll><ScrollButton aria-label="Yukarı kaydır"><Up /></ScrollButton><VThumb /><VTrack /><ScrollButton aria-label="Aşağı kaydır"><Down /></ScrollButton></VScroll>
      </SheetArea>
      <SheetBar>
        <TabArrows><Left /><Right /></TabArrows>
        <SheetTab $w={98} $active>İcra Bilgileri</SheetTab><SheetTab $w={65}>Veriler</SheetTab><SheetTab $w={72}>Ödenen</SheetTab><SheetTab $w={114}>Çıkan Personel</SheetTab>
        <AddSheet aria-label="Yeni sayfa"><svg width="16" height="16" viewBox="0 0 16 16" fill="none" stroke="currentColor"><circle cx="8" cy="8" r="7.500" /><path d="M8 4v8M4 8h8" strokeWidth="1.800" /></svg></AddSheet>
        <HScroll>
          <Grip><svg width="2" height="14" fill="currentColor"><path d="M0 0h2v2H0zM0 5h2v2H0zM0 10h2v2H0z" /></svg></Grip>
          <ScrollButton aria-label="Sola kaydır"><Left /></ScrollButton><HThumb /><HTrack /><ScrollButton aria-label="Sağa kaydır"><Right /></ScrollButton>
        </HScroll>
      </SheetBar>
      <StatusBar>
        <span>Hazır</span>
        <ViewButton $on aria-label="Normal"><svg width="13" height="13" viewBox="0 0 13 13" fill="none" stroke="currentColor"><path d="M.5.500h12v12H.500zM4.500 0v13M8.500 0v13M0 4.500h13M0 8.500h13" /></svg></ViewButton>
        <ViewButton aria-label="Sayfa düzeni"><svg width="13" height="13" viewBox="0 0 13 13" fill="none" stroke="currentColor"><path d="M.5.500h12v12H.500zM2.500 2.500h8v8h-8zM4 4.500h5M4 6.500h5M4 8.500h5" /></svg></ViewButton>
        <ViewButton aria-label="Sayfa sonu"><svg width="13" height="13" viewBox="0 0 13 13" fill="none" stroke="currentColor"><path d="M.5.500h12v12H.500zM4.500 0v7M8.500 0v7.500H1" /></svg></ViewButton>
        <ZoomStep>-</ZoomStep><ZoomRange type="range" aria-label="Yakınlaştırma" defaultValue={50} /><ZoomStep>+</ZoomStep><ZoomValue>%100</ZoomValue>
      </StatusBar>
      <Taskbar>
        <TaskButton $w={48} aria-label="Başlat"><svg width="16" height="16" viewBox="0 0 16 16" fill="#fff"><path d="M0 2.200l7-1v6.300H0zM8 1l8-1v7.500H8zM0 8.500h7v6.300l-7-1zM8 8.500h8V16l-8-1z" /></svg></TaskButton>
        <SearchBox><svg width="17" height="17" viewBox="0 0 17 17" fill="none" stroke="#222" strokeWidth="1.400"><circle cx="10.500" cy="6.500" r="5.500" /><path d="M6.500 10.500L1 16" /></svg><input aria-label="Arama" placeholder="Aramak için buraya yazın" /><SearchArt /></SearchBox>
        <TaskButton aria-label="Cortana"><svg width="16" height="16"><circle cx="8" cy="8" r="6.800" fill="none" stroke="#fff" strokeWidth="2" /></svg></TaskButton>
        <TaskButton aria-label="Görev görünümü"><svg width="17" height="15" viewBox="0 0 17 15" fill="none" stroke="#fff" strokeWidth="1.200"><path d="M1 0v2.500h9V0M1 15v-2.500h9V15M1 4.500h9v6H1zM14.500 0v3M14.500 8v7" /><path d="M13 4h3v3h-3z" fill="#fff" stroke="none" /></svg></TaskButton>
        <TaskButton $open aria-label="Dosya Gezgini"><svg width="22" height="19" viewBox="0 0 22 19"><path d="M0 1h8l2 2h12v15H0z" fill="#e9bf4d" /><path d="M0 5h22v13H0z" fill="#f9dd80" /><path d="M4 11h14v8h-4v-4H8v4H4z" fill="#3f8fc9" /></svg></TaskButton>
        <TaskButton $open aria-label="Chrome"><svg width="22" height="22" viewBox="0 0 22 22"><circle cx="11" cy="11" r="11" fill="#e0453a" /><path d="M1.500 5.500A11 11 0 0011 22l5-8.500-5-2z" fill="#35a453" /><path d="M11 22A11 11 0 0020.500 5.500H11l5 8z" fill="#fbc72c" /><circle cx="11" cy="11" r="5.300" fill="#fff" /><circle cx="11" cy="11" r="4.200" fill="#3f7fe8" /></svg></TaskButton>
        <TaskButton aria-label="Yelken"><svg width="22" height="20" viewBox="0 0 22 20"><path d="M0 0h22v20H0z" fill="#0d2550" /><path d="M2 17c3-1 5-4 6-8v8zM8.500 17c3-4 4-9 5-15l1 15zM15.500 17c1-4 3-9 4-14v14z" fill="#fff" /></svg></TaskButton>
        <TaskButton aria-label="Word"><OfficeIcon c="#2b579a" letter="W" /></TaskButton>
        <TaskButton $open $on aria-label="Excel"><OfficeIcon c="#1e7145" letter="X" /></TaskButton>
        <TaskButton $open aria-label="Outlook"><OfficeIcon c="#0f6fc6" letter="O" /></TaskButton>
        <Tray>
          <Weather><svg width="22" height="18" viewBox="0 0 22 18"><circle cx="8" cy="7" r="7" fill="#f2bb4e" /><path d="M6 17a5 5 0 01-1-9c2-5 9-5 11 0 6 1 5 9 0 9z" fill="#cfe3f5" /></svg><span>26°C</span><span>Çok bulutlu</span></Weather>
          <TrayIcons>
            <svg width="18" height="14" viewBox="0 0 18 14" fill="none" stroke="#fff"><path d="M3 0v3M1 3h4v3H1zM6.500 4.500h9v6h-9zM3 6v6h12" /><path d="M8 6h6v3H8z" fill="#fff" /></svg>
            <svg width="16" height="14" viewBox="0 0 16 14" fill="none" stroke="#ccc"><path d="M1 5h2l3-3v10L3 9H1zM9 4c2 2 2 4 0 6M12 2c3 3 3 7 0 10" /></svg>
          </TrayIcons>
          <Clock>17:48<span>23.06.2021</span></Clock>
          <Notice aria-label="Bildirimler"><svg width="17" height="17" viewBox="0 0 17 17" fill="#fff"><path d="M0 0h17v13H8l-4 4v-4H0z" /></svg></Notice>
        </Tray>
        <Watermark>
          <svg width="34" height="26" viewBox="0 0 34 26"><path d="M13 2h8a12 12 0 010 24h-7l4-6h3a6 6 0 000-12h-5z" fill="#3fb24a" /><path d="M0 1h7l14 25h-7zM19 1h-5L1 26h6z" fill="#fff" /></svg>
          EXCEL<b>DEPO</b>
        </Watermark>
      </Taskbar>
      <EntryDialog />
    </Screen>
  );
}
